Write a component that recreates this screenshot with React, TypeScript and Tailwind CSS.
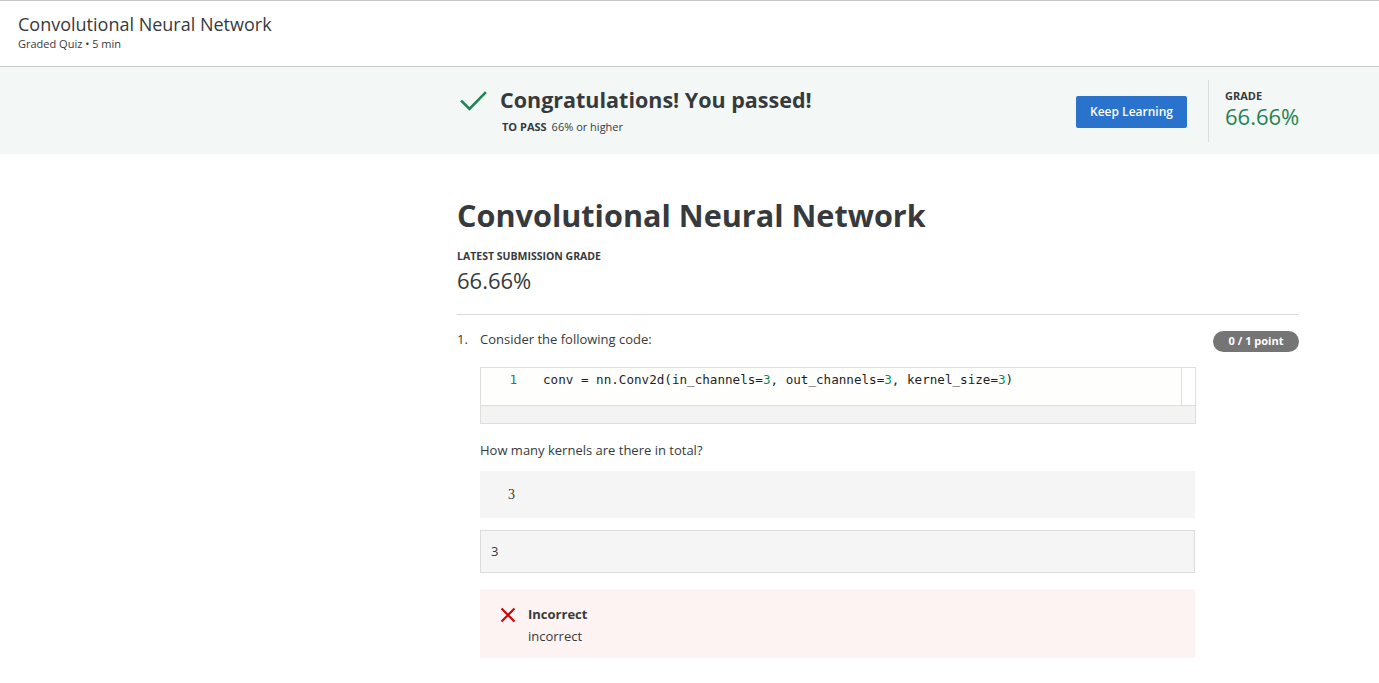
import React from "react";

export default function App() {
  const sans = { fontFamily: '"Open Sans", "Noto Sans", sans-serif' };
  return (
    <div className="min-h-[683px] bg-white text-[#373a3c]" style={sans}>
      {/* Header */}
      <div className="border-t border-b border-[#c7c7c7] h-[67px] pl-[18px] pt-[11px]">
        <div className="text-[18px] leading-[24px] text-[#373a3c]">Convolutional Neural Network</div>
        <div className="text-[11px] leading-[16px] text-[#373a3c]">Graded Quiz • 5 min</div>
      </div>

      {/* Banner */}
      <div className="bg-[#f3f8f7] h-[87px]">
        <div className="ml-[457px] w-[842px] h-full flex items-center">
          <div className="flex items-start flex-1 pb-[2px]">
            <svg width="28" height="22" viewBox="0 0 28 22" className="mt-[5px] ml-[3px]">
              <path d="M2 11.5 L9.5 19 L25 3" stroke="#1f8354" strokeWidth="2.6" fill="none" strokeLinecap="square" />
            </svg>
            <div className="ml-[12px]">
              <div className="text-[21.5px] leading-[30px] font-bold text-[#373a3c]">Congratulations! You passed!</div>
              <div className="text-[11px] leading-[16px] mt-[4px] ml-[2px]">
                <span className="font-bold">TO PASS</span>
                <span className="ml-[5px]">66% or higher</span>
              </div>
            </div>
          </div>
          <button className="bg-[#2a73cc] text-white text-[12px] font-semibold rounded-[2px] w-[111px] h-[32px] mr-[21px] mt-[2px]">
            Keep Learning
          </button>
          <div className="w-px h-[62px] bg-[#dcdcdc]"></div>
          <div className="pl-[16px] w-[90px] pb-[3px]">
            <div className="text-[11px] font-bold leading-[14px] text-[#373a3c]">GRADE</div>
            <div className="text-[22px] leading-[26px] text-[#1f8354]">66.66%</div>
          </div>
        </div>
      </div>

      {/* Main */}
      <div className="ml-[457px] w-[842px]">
        <div className="pt-[40px] text-[30.6px] leading-[42px] font-bold text-[#373a3c]">Convolutional Neural Network</div>
        <div className="mt-[13px] text-[10.5px] leading-[14px] font-bold">LATEST SUBMISSION GRADE</div>
        <div className="text-[22px] leading-[30px] mt-[2px]">66.66%</div>
        <div className="mt-[19px] border-t border-[#d9d9d9]"></div>

        <div className="flex pt-[16px]">
          <div className="w-[23px] text-[13px] leading-[16px]">1.</div>
          <div className="flex-1">
            <div className="flex items-start justify-between">
              <div className="text-[13px] leading-[16px]">Consider the following code:</div>
              <div className="bg-[#757575] text-white text-[11px] font-bold rounded-full h-[21px] w-[86px] flex items-center justify-center">
                0 / 1 point
              </div>
            </div>
            <div className="mt-[15px] w-[716px] border border-[#dedede]">
              <div className="flex h-[37px] bg-[#fefefd]">
                <div className="flex-1 flex pt-[3px]" style={{ fontFamily: '"DejaVu Sans Mono", monospace' }}>
                  <div className="w-[36px] text-right text-[12.6px] leading-[18px] text-[#237893]">1</div>
                  <div className="ml-[26px] text-[12.6px] leading-[18px] text-[#1f1f1f] whitespace-pre">
                    conv = nn.Conv2d(in_channels=<span className="text-[#09885a]">3</span>, out_channels=<span className="text-[#09885a]">3</span>, kernel_size=<span className="text-[#09885a]">3</span>)
                  </div>
                </div>
                <div className="w-[14px] border-l border-[#dedede] bg-white"></div>
              </div>
              <div className="h-[18px] bg-[#f3f3f3] border-t border-[#dedede]"></div>
            </div>

            <div className="mt-[16px] text-[13px] leading-[20px]">How many kernels are there in total?</div>
            <div className="mt-[11px] w-[715px] h-[47px] bg-[#f5f5f5] flex items-center pl-[28px] text-[14px]" style={{ fontFamily: '"Liberation Serif", "DejaVu Serif", serif' }}>
              3
            </div>
            <div className="mt-[12px] w-[715px] h-[43px] bg-[#f5f5f5] border border-[#dcdcdc] flex items-center pl-[10px] text-[13px] text-[#373a3c]">
              3
            </div>
            <div className="mt-[16px] w-[715px] h-[69px] bg-[#fdf3f3] flex pl-[20px] pt-[16px]">
              <svg width="16" height="16" viewBox="0 0 16 16" className="mt-[2px]">
                <path d="M1.5 1.5 L14.5 14.5 M14.5 1.5 L1.5 14.5" stroke="#d30001" strokeWidth="2" fill="none" />
              </svg>
              <div className="ml-[12px]">
                <div className="text-[13px] leading-[18px] font-bold">Incorrect</div>
                <div className="text-[13px] leading-[18px] mt-[4px]">incorrect</div>
              </div>
            </div>
          </div>
        </div>
      </div>
    </div>
  );
}
